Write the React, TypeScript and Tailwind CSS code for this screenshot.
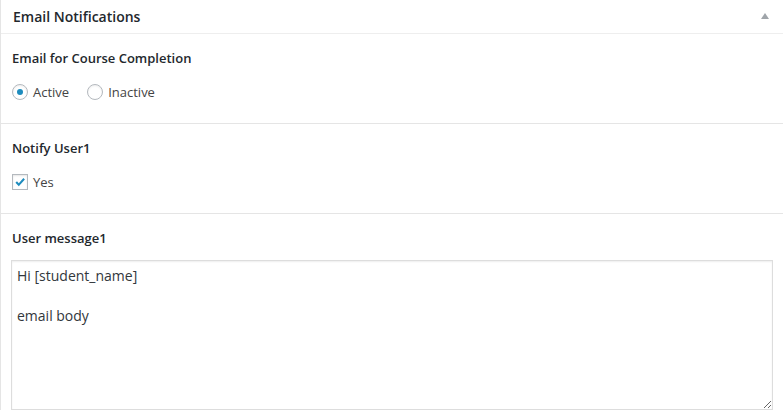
import React, { useState } from 'react';

// Email notifications meta box
const App: React.FC = () => {
  const [status, setStatus] = useState<'active' | 'inactive'>('active');
  const [notify, setNotify] = useState(true);
  const [message, setMessage] = useState('Hi [student_name]\n\nemail body');

  return (
    <div
      className="min-h-screen bg-white text-[13px] text-[#444]"
      style={{ fontFamily: '"Open Sans", "Noto Sans", sans-serif' }}
    >
      <div className="border-l border-[#e5e5e5] w-[800px]">
        {/* Header */}
        <div className="h-[34px] border-b border-[#eeeeee] flex items-center pl-[12px] pr-[31px]">
          <h2 className="flex-1 text-[14px] font-semibold text-[#23282d] leading-[19px]">
            Email Notifications
          </h2>
          <span className="w-0 h-0 border-l-[4px] border-r-[4px] border-b-[6px] border-l-transparent border-r-transparent border-b-[#a0a5aa] mb-[2px]" />
        </div>

        {/* Email for Course Completion */}
        <div className="border-b border-[#e5e5e5] pt-[15px] pb-[23px] pl-[11px]">
          <div className="text-[13px] font-semibold text-[#23282d] leading-[18px]">
            Email for Course Completion
          </div>
          <div className="mt-[17px] h-[16px] flex items-center">
            <label className="flex items-center cursor-pointer" onClick={() => setStatus('active')}>
              <span className="w-[16px] h-[16px] rounded-full border border-[#b4b9be] bg-white flex items-center justify-center shadow-[inset_0_1px_2px_rgba(0,0,0,0.07)]">
                {status === 'active' && <span className="w-[6px] h-[6px] rounded-full bg-[#1e8cbe]" />}
              </span>
              <span className="ml-[5px] leading-[18px]">Active</span>
            </label>
            <label className="flex items-center cursor-pointer ml-[18px]" onClick={() => setStatus('inactive')}>
              <span className="w-[16px] h-[16px] rounded-full border border-[#b4b9be] bg-white flex items-center justify-center shadow-[inset_0_1px_2px_rgba(0,0,0,0.07)]">
                {status === 'inactive' && <span className="w-[6px] h-[6px] rounded-full bg-[#1e8cbe]" />}
              </span>
              <span className="ml-[5px] leading-[18px]">Inactive</span>
            </label>
          </div>
        </div>

        {/* Notify User1 */}
        <div className="border-b border-[#e5e5e5] pt-[15px] pb-[23px] pl-[11px]">
          <div className="text-[13px] font-semibold text-[#23282d] leading-[18px]">Notify User1</div>
          <div className="mt-[17px] h-[16px] flex items-center">
            <label className="flex items-center cursor-pointer" onClick={() => setNotify(!notify)}>
              <span className="w-[16px] h-[16px] border border-[#b4b9be] bg-white flex items-center justify-center shadow-[inset_0_1px_2px_rgba(0,0,0,0.1)]">
                {notify && (
                  <svg width="15" height="15" viewBox="0 0 20 20">
                    <path d="M3.5 10.5l2.2-2.2 2.6 2.6L14.8 3.5l2.2 2.2-8.7 9.8z" fill="#1e8cbe" />
                  </svg>
                )}
              </span>
              <span className="ml-[5px] leading-[18px]">Yes</span>
            </label>
          </div>
        </div>

        {/* User message1 */}
        <div className="pt-[15px] pl-[10px]">
          <div className="pl-[1px] text-[13px] font-semibold text-[#23282d] leading-[18px]">User message1</div>
          <textarea
            value={message}
            onChange={(e) => setMessage(e.target.value)}
            className="mt-[13px] block w-[762px] h-[150px] border border-[#dddddd] shadow-[inset_0_1px_2px_rgba(0,0,0,0.07)] px-[5px] pt-[5px] text-[14px] leading-[20px] text-[#32373c] outline-none"
            style={{ fontFamily: '"Open Sans", "Noto Sans", sans-serif' }}
          />
        </div>
      </div>
    </div>
  );
};

export default App;
